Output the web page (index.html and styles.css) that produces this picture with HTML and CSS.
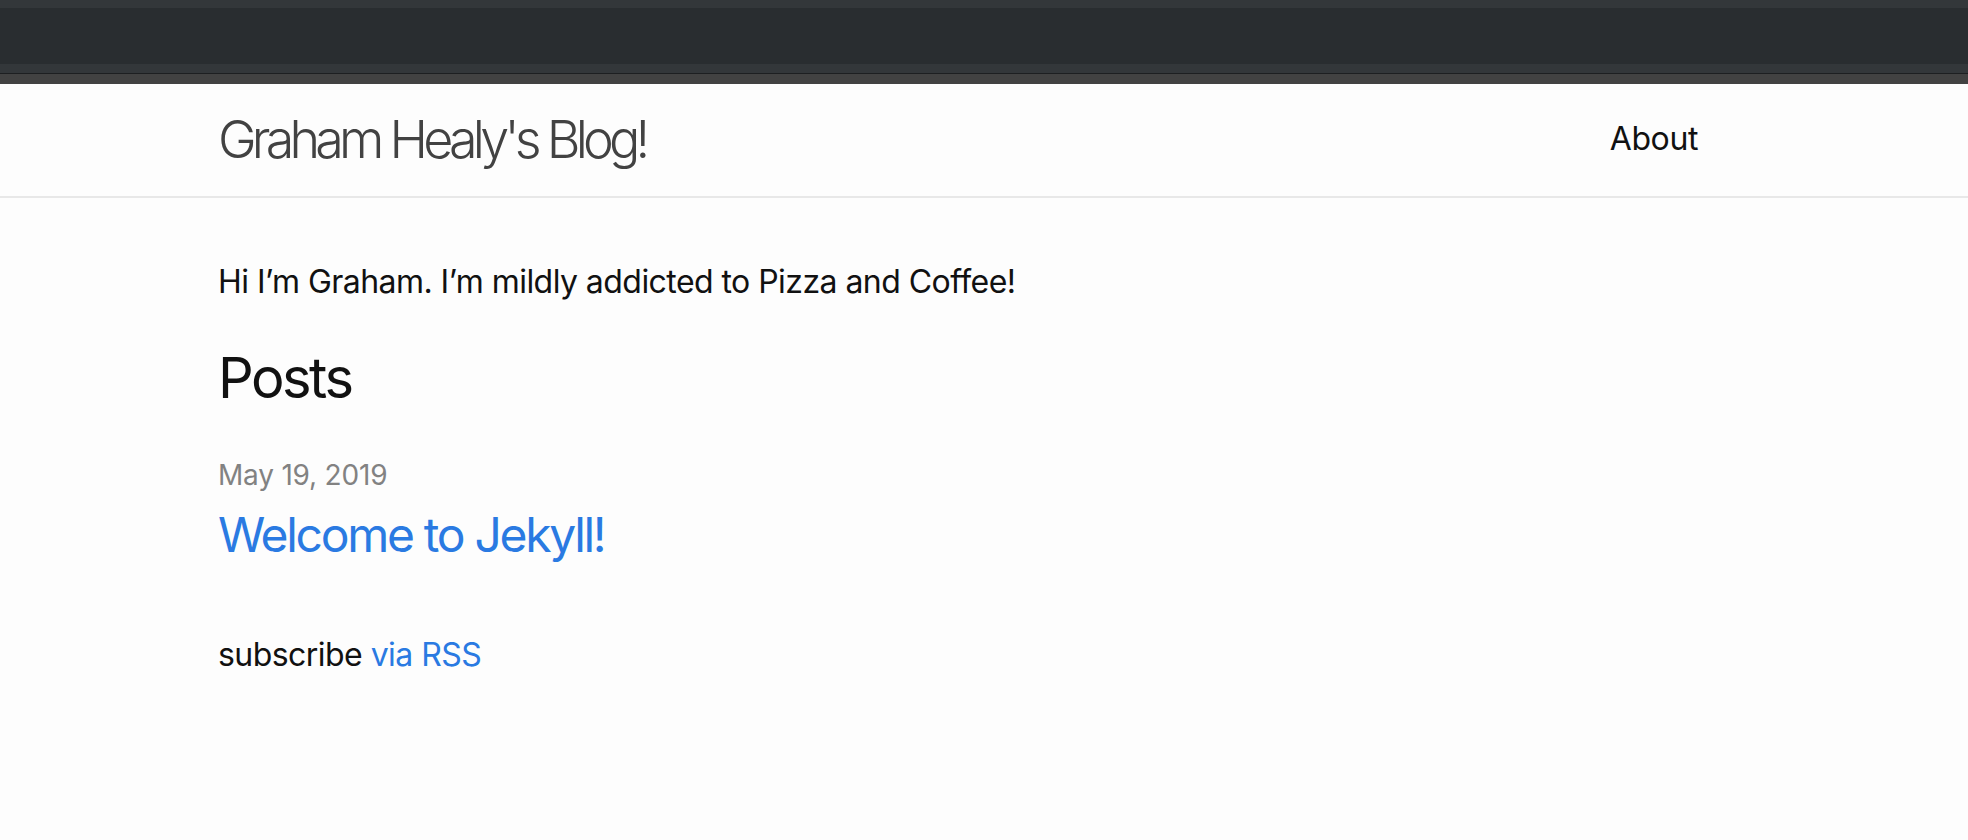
FILE: index.html
```html
<!DOCTYPE html>
<html lang="en">
<head>
<meta charset="utf-8">
<title>Graham Healy's Blog!</title>
<link rel="stylesheet" href="styles.css">
</head>
<body>
<div class="chrome">
  <div class="chrome-top"></div>
  <div class="chrome-mid"></div>
  <div class="chrome-bottom"></div>
</div>
<header class="site-header">
  <div class="wrapper header-row">
    <a class="site-title" href="#">Graham Healy's Blog!</a>
    <nav class="site-nav"><a class="page-link" href="#">About</a></nav>
  </div>
</header>
<main class="page-content">
  <div class="wrapper">
    <p class="intro">Hi I’m Graham. I’m mildly addicted to Pizza and Coffee!</p>
    <h2 class="post-list-heading">Posts</h2>
    <ul class="post-list">
      <li>
        <span class="post-meta">May 19, 2019</span>
        <h3 class="post-title"><a class="post-link" href="#">Welcome to Jekyll!</a></h3>
      </li>
    </ul>
    <p class="rss-subscribe">subscribe <a href="#">via RSS</a></p>
  </div>
</main>
</body>
</html>
```
FILE: styles.css
```css
* { box-sizing: border-box; }
html, body {
  margin: 0;
  padding: 0;
}
body {
  background: #fdfdfd;
  color: #111111;
  font-family: Inter, "Noto Sans", "Liberation Sans", sans-serif;
  font-size: 32px;
  line-height: 48px;
  letter-spacing: -0.55px;
  height: 840px;
  overflow: hidden;
}
a { text-decoration: none; }

.chrome-top { height: 8px; background: #33373a; }
.chrome-mid { height: 56px; background: #292d30; }
.chrome-bottom { height: 10px; background: #33373a; border-bottom: 1px solid #1d1f21; }

.wrapper {
  width: 1480px;
  margin-left: 218px;
}

.site-header {
  border-top: 10px solid #424242;
  border-bottom: 2px solid #e8e8e8;
  height: 124px;
}
.header-row {
  display: flex;
  justify-content: space-between;
  align-items: flex-start;
  height: 112px;
}
.site-title {
  font-size: 52px;
  font-weight: 300;
  letter-spacing: -4.8px;
  line-height: 112px;
  color: #424242;
}
.site-nav { line-height: 110px; letter-spacing: -0.4px; }
.page-link { color: #111111; }

.page-content { padding-top: 60px; }
.intro { margin: 0 0 30px; }
.post-list-heading {
  font-size: 56px;
  font-weight: 400;
  line-height: 84px;
  letter-spacing: -2.5px;
  margin: 0 0 30px;
}
.post-list {
  display: flow-root;
  list-style: none;
  margin: 0 0 30px;
  padding: 0;
}
.post-meta {
  font-size: 28px;
  letter-spacing: -0.2px;
  color: #828282;
}
.post-title {
  font-size: 48px;
  font-weight: 400;
  line-height: 72px;
  letter-spacing: -2.3px;
  margin: 0 0 30px;
}
.post-link { color: #2a7ae2; }
.rss-subscribe { margin: 0; }
.rss-subscribe a { color: #2a7ae2; }
```
